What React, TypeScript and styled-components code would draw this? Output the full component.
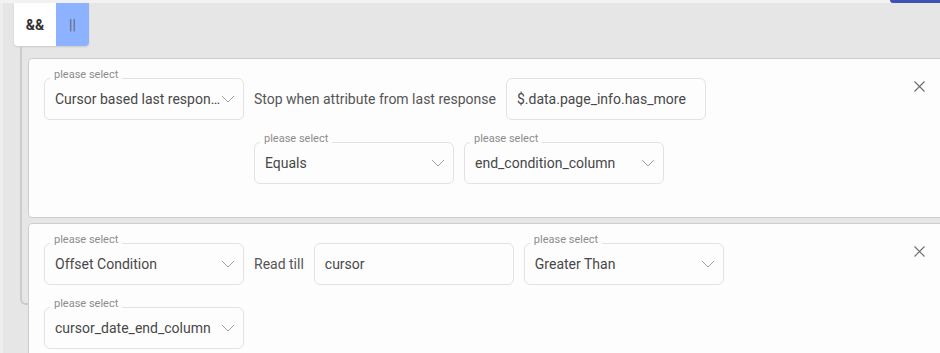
import React from 'react';
import styled, { createGlobalStyle } from 'styled-components';

const GlobalStyle = createGlobalStyle`
  html, body {
    margin: 0;
    padding: 0;
    background: #e6e6e6;
    font-family: Roboto, "Liberation Sans", sans-serif;
    overflow: hidden;
  }
  * { box-sizing: border-box; }
`;

const TopStrip = styled.div`
  height: 3px;
  background: #f2f2f2;
  display: flex;
  justify-content: flex-end;
`;

const SaveButtonEdge = styled.div`
  width: 50px;
  height: 3px;
  background: #3f51b5;
  border-bottom-left-radius: 4px;
`;

const Main = styled.main`
  border-left: 3px solid #eeeeee;
  min-height: 350px;
  display: flex;
  flex-direction: column;
  align-items: flex-start;
`;

const OperatorTabs = styled.div`
  display: flex;
  margin-left: 11px;
  height: 43px;
  border-radius: 0 0 4px 4px;
  overflow: hidden;
  box-shadow: 0 1px 2px rgba(0, 0, 0, 0.12);
`;

const OperatorTab = styled.div<{ $active?: boolean }>`
  display: flex;
  align-items: center;
  justify-content: center;
  width: ${p => (p.$active ? '33px' : '42px')};
  background: ${p => (p.$active ? '#8db2ff' : '#ffffff')};
  color: ${p => (p.$active ? '#5f6470' : '#333')};
  font-size: 14px;
  font-weight: ${p => (p.$active ? 400 : 700)};
`;

const Branch = styled.div`
  position: relative;
  align-self: stretch;
  margin: 12px -12px 0 17px;
  padding-left: 8px;
  display: flex;
  flex-direction: column;
  gap: 5px;

  &::before {
    content: '';
    position: absolute;
    left: 0;
    top: -12px;
    width: 8px;
    height: 257px;
    border-left: 2px solid #cbcbcb;
    border-bottom: 2px solid #cbcbcb;
    border-bottom-left-radius: 6px;
  }
`;

const Card = styled.section`
  position: relative;
  background: #fdfdfd;
  border: 1px solid #cdcdcd;
  border-radius: 4px;
  padding: 19px 0 33px 15px;
  display: flex;
`;

const CardBody = styled.div`
  flex: 1;
  display: flex;
  flex-direction: column;
  gap: 22px;
`;

const Row = styled.div<{ $indent?: number }>`
  display: flex;
  align-items: center;
  gap: 10px;
  padding-left: ${p => p.$indent ?? 0}px;
`;

const Field = styled.div`
  position: relative;
  width: 200px;
  height: 42px;
  border: 1px solid #e2e2e2;
  border-radius: 6px;
  background: #fdfdfd;
  display: flex;
  align-items: center;
  padding: 0 8px 0 10px;
`;

const FieldLabel = styled.span`
  position: absolute;
  top: -11px;
  left: 5px;
  padding: 0 4px;
  background: #fdfdfd;
  font-size: 11px;
  line-height: 14px;
  color: #8c8c8c;
`;

const FieldValue = styled.span`
  flex: 1;
  min-width: 0;
  font-size: 14px;
  color: #474747;
  white-space: nowrap;
  overflow: hidden;
  text-overflow: ellipsis;
`;

const Caption = styled.span`
  font-size: 14px;
  color: #555;
  white-space: nowrap;
`;

const CloseButton = styled.button`
  align-self: flex-start;
  background: none;
  border: 0;
  padding: 0;
  margin: 3px 26px 0 0;
  width: 11px;
  height: 11px;
  display: flex;
  cursor: pointer;
`;

const Chevron = () => (
  <svg width="14" height="8" viewBox="0 0 14 8">
    <polyline points="1,1 7,7 13,1" fill="none" stroke="#a0a0a0" strokeWidth="1" />
  </svg>
);

const CloseIcon = () => (
  <svg width="11" height="11" viewBox="0 0 11 11">
    <path d="M0.5 0.5 L10.5 10.5 M10.5 0.5 L0.5 10.5" stroke="#6b6b6b" strokeWidth="1.1" />
  </svg>
);

const Select = ({ value }: { value: string }) => (
  <Field>
    <FieldLabel>please select</FieldLabel>
    <FieldValue>{value}</FieldValue>
    <Chevron />
  </Field>
);

const Input = ({ value }: { value: string }) => (
  <Field>
    <FieldValue>{value}</FieldValue>
  </Field>
);

export default function App() {
  return (
    <>
      <GlobalStyle />
      <TopStrip>
        <SaveButtonEdge />
      </TopStrip>
      <Main>
        <OperatorTabs>
          <OperatorTab>&amp;&amp;</OperatorTab>
          <OperatorTab $active>||</OperatorTab>
        </OperatorTabs>
        <Branch>
          <Card>
            <CardBody>
              <Row>
                <Select value="Cursor based last response" />
                <Caption>Stop when attribute from last response</Caption>
                <Input value="$.data.page_info.has_more" />
              </Row>
              <Row $indent={210}>
                <Select value="Equals" />
                <Select value="end_condition_column" />
              </Row>
            </CardBody>
            <CloseButton aria-label="remove">
              <CloseIcon />
            </CloseButton>
          </Card>
          <Card>
            <CardBody>
              <Row>
                <Select value="Offset Condition" />
                <Caption>Read till</Caption>
                <Input value="cursor" />
                <Select value="Greater Than" />
              </Row>
              <Row>
                <Select value="cursor_date_end_column" />
              </Row>
            </CardBody>
            <CloseButton aria-label="remove">
              <CloseIcon />
            </CloseButton>
          </Card>
        </Branch>
      </Main>
    </>
  );
}
